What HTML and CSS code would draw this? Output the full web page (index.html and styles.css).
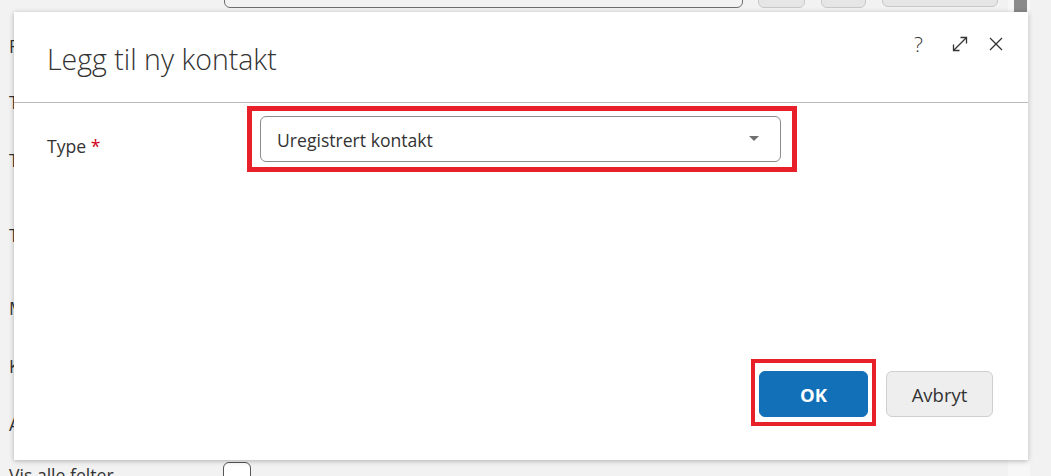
FILE: index.html
```html
<!DOCTYPE html>
<html lang="no">
<head>
<meta charset="utf-8">
<title>Legg til ny kontakt</title>
<link rel="stylesheet" href="styles.css">
</head>
<body>
<div class="page">
  <div class="main">
    <div class="toprow">
      <div class="bg-input"></div>
      <div class="bg-btn b1"></div>
      <div class="bg-btn b2"></div>
      <div class="bg-btn b3"></div>
    </div>
    <div class="bg-form">
      <div class="bg-row r1">F</div>
      <div class="bg-row r2">T</div>
      <div class="bg-row r3">T</div>
      <div class="bg-row r4">T</div>
      <div class="bg-row r5">M</div>
      <div class="bg-row r6">K</div>
      <div class="bg-row r7">A</div>
      <div class="bg-row r8"><span class="vis-label">Vis alle felter</span><span class="bg-check"></span></div>
    </div>
  </div>
  <div class="scrolltrack"><div class="thumb"></div></div>
  <div class="outside"></div>

  <div class="dialog">
    <div class="dlg-header">
      <h1 class="dlg-title">Legg til ny kontakt</h1>
      <div class="dlg-tools">
        <span class="tool tool-help">?</span>
        <svg class="tool" width="18" height="18" viewBox="0 0 18 18" fill="none" stroke="#333" stroke-width="1.3">
          <path d="M2.5 15.5 L15.5 2.5"/>
          <path d="M9.5 2.5 H15.5 V8.5"/>
          <path d="M2.5 9.5 V15.5 H8.5"/>
        </svg>
        <svg class="tool" width="16" height="16" viewBox="0 0 16 16" fill="none" stroke="#333" stroke-width="1.3">
          <path d="M2 2 L14 14 M14 2 L2 14"/>
        </svg>
      </div>
    </div>
    <div class="dlg-body">
      <div class="field-label">Type <span class="req">*</span></div>
      <div class="highlight hl-select">
        <div class="select">
          <span class="select-value">Uregistrert kontakt</span>
          <span class="caret"></span>
        </div>
      </div>
    </div>
    <div class="dlg-footer">
      <div class="highlight hl-ok">
        <button class="btn btn-primary">OK</button>
      </div>
      <button class="btn btn-default">Avbryt</button>
    </div>
  </div>
</div>
</body>
</html>
```

FILE: styles.css
```css
html, body {
  margin: 0;
  padding: 0;
}
body {
  width: 1051px;
  height: 476px;
  overflow: hidden;
  background: #f2f2f2;
  font-family: "Open Sans", "Liberation Sans", sans-serif;
  color: #333;
}
.page {
  position: relative;
  display: flex;
  width: 1051px;
  height: 476px;
  overflow: hidden;
}
.main {
  width: 1008px;
  flex: none;
  background: #f2f2f2;
}
.scrolltrack {
  width: 22px;
  flex: none;
  background: #f7f7f7;
  padding-left: 6px;
  box-sizing: border-box;
}
.thumb {
  width: 13px;
  height: 60px;
  background: #8a8a8a;
}
.outside {
  flex: 1;
  background: #f2f2f2;
}

/* background page */
.toprow {
  display: flex;
  align-items: flex-end;
  height: 38px;
  margin-top: -30px;
  padding-left: 224px;
}
.bg-input {
  width: 519px;
  height: 38px;
  box-sizing: border-box;
  border: 1px solid #6f6f6f;
  border-radius: 6px;
  background: #f2f2f2;
}
.bg-btn {
  height: 38px;
  box-sizing: border-box;
  border: 1px solid #c8c8c8;
  border-radius: 6px;
  background: #e6e6e6;
}
.b1 { width: 47px; margin-left: 15px; }
.b2 { width: 45px; margin-left: 16px; }
.b3 { width: 116px; margin-left: 16px; height: 37px; align-self: flex-start; }

.bg-form {
  padding-left: 9px;
  padding-top: 27px;
  font-size: 17.6px;
}
.bg-row {
  height: 22px;
  line-height: 22px;
}
.r2 { margin-top: 34px; }
.r3 { margin-top: 36px; }
.r4 { margin-top: 53px; }
.r5 { margin-top: 51px; }
.r6 { margin-top: 36px; }
.r7 { margin-top: 36px; }
.r8 {
  margin-top: 27px;
  display: flex;
  align-items: flex-start;
}
.vis-label {
  width: 214px;
  line-height: 22px;
  padding-top: 2px;
}
.bg-check {
  width: 28px;
  height: 28px;
  box-sizing: border-box;
  border: 1px solid #555;
  border-radius: 6px;
  background: #fff;
}

/* dialog */
.dialog {
  position: absolute;
  left: 14px;
  top: 12px;
  width: 1014px;
  height: 448px;
  background: #fff;
  box-shadow: 0 1px 5px rgba(0, 0, 0, 0.28);
  display: flex;
  flex-direction: column;
}
.dlg-header {
  height: 90px;
  border-bottom: 1px solid #b9b9b9;
  display: flex;
  justify-content: space-between;
  align-items: flex-start;
  padding-left: 33px;
  padding-right: 24px;
}
.dlg-title {
  margin: 0;
  margin-top: 30px;
  font-size: 28.5px;
  line-height: 34px;
  font-weight: 300;
  color: #333;
  letter-spacing: 0;
}
.dlg-tools {
  display: flex;
  align-items: center;
  margin-top: 22px;
  gap: 0;
}
.tool {
  display: block;
}
.tool-help {
  font-size: 21px;
  font-weight: 300;
  color: #333;
  line-height: 20px;
  width: 14px;
  margin-right: 23px;
}
.dlg-tools svg:nth-of-type(1) { margin-right: 19px; }

.dlg-body {
  flex: 1;
  display: flex;
  align-items: flex-start;
  padding-left: 33px;
  padding-top: 3px;
}
.field-label {
  width: 200px;
  font-size: 17.6px;
  line-height: 24px;
  padding-top: 28px;
  color: #333;
}
.req {
  color: #d0021b;
}
.highlight {
  border: 5px solid #e8202a;
  box-sizing: border-box;
}
.hl-select {
  width: 550px;
  padding: 5px 11px 5px 8px;
}
.select {
  height: 46px;
  box-sizing: border-box;
  border: 1px solid #8c8c8c;
  border-radius: 6px;
  display: flex;
  align-items: center;
  justify-content: space-between;
  padding: 0 21px 0 16px;
  font-size: 17.6px;
  color: #333;
}
.select-value {
  padding-top: 2px;
}
.caret {
  width: 0;
  height: 0;
  border-left: 5px solid transparent;
  border-right: 5px solid transparent;
  border-top: 5px solid #707070;
  margin-top: -2px;
}

.dlg-footer {
  display: flex;
  justify-content: flex-end;
  align-items: flex-end;
  padding-right: 35px;
  padding-bottom: 34px;
  gap: 10px;
}
.hl-ok {
  border-width: 4px;
  padding: 8px 4px 5px 4px;
}
.btn {
  display: block;
  height: 46px;
  box-sizing: border-box;
  border-radius: 6px;
  font-family: "Open Sans", "Liberation Sans", sans-serif;
  font-size: 18.5px;
  cursor: pointer;
  padding: 0;
}
.btn-primary {
  width: 109px;
  background: #1170b7;
  border: 1px solid #1170b7;
  color: #fff;
  font-weight: 700;
}
.btn-default {
  width: 107px;
  background: #eeeeee;
  border: 1px solid #cfcfcf;
  color: #333;
  margin-bottom: 9px;
}
```
